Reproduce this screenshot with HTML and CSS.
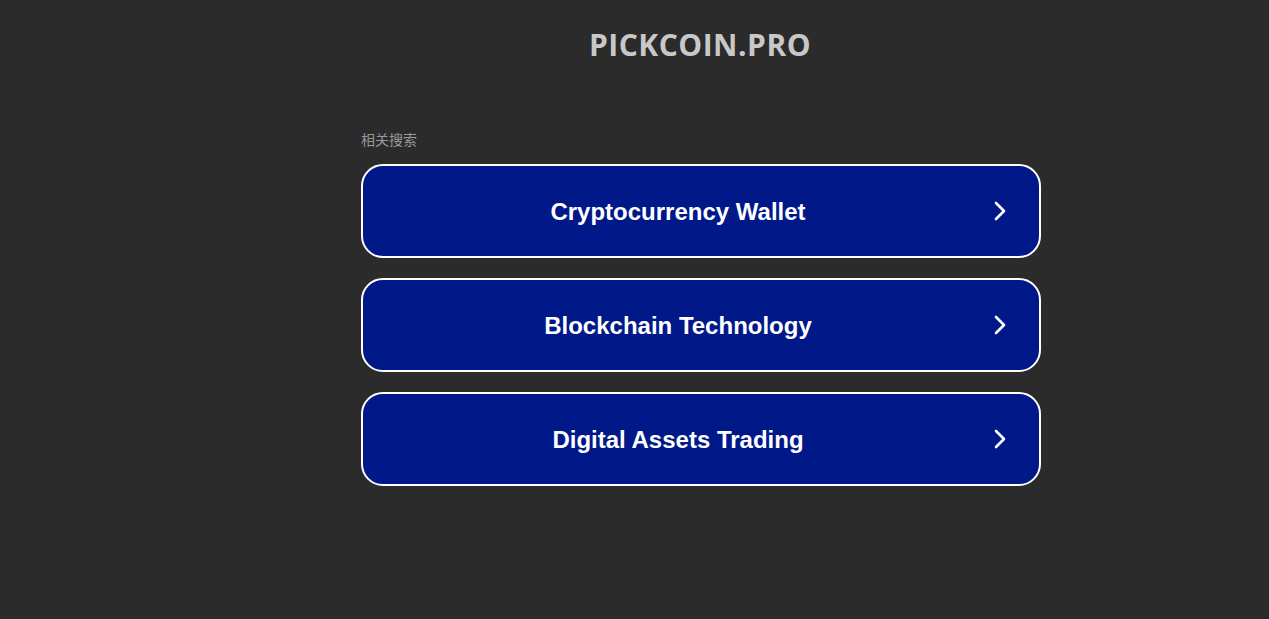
FILE: index.html
```html
<!DOCTYPE html>
<html lang="zh">
<head>
<meta charset="utf-8">
<title>pickcoin.pro</title>
<link rel="stylesheet" href="styles.css">
</head>
<body>
<header class="header">
  <h1 class="domain">PICKCOIN.PRO</h1>
</header>
<main class="content">
  <div class="label">相关搜索</div>
  <ul class="links">
    <li><a class="link" href="#"><span class="link-text">Cryptocurrency Wallet</span><svg class="chev" viewBox="0 0 14 20" width="14" height="20"><path d="M3 2 L11 10 L3 18" fill="none" stroke="#fff" stroke-width="2.6" stroke-linecap="round" stroke-linejoin="round"/></svg></a></li>
    <li><a class="link" href="#"><span class="link-text">Blockchain Technology</span><svg class="chev" viewBox="0 0 14 20" width="14" height="20"><path d="M3 2 L11 10 L3 18" fill="none" stroke="#fff" stroke-width="2.6" stroke-linecap="round" stroke-linejoin="round"/></svg></a></li>
    <li><a class="link" href="#"><span class="link-text">Digital Assets Trading</span><svg class="chev" viewBox="0 0 14 20" width="14" height="20"><path d="M3 2 L11 10 L3 18" fill="none" stroke="#fff" stroke-width="2.6" stroke-linecap="round" stroke-linejoin="round"/></svg></a></li>
  </ul>
</main>
</body>
</html>
```
FILE: styles.css
```css
html, body {
  margin: 0;
  padding: 0;
  background: #2b2b2b;
  height: 100%;
}
body {
  font-family: "Liberation Sans", Arial, sans-serif;
}
.header {
  display: flex;
  justify-content: center;
  padding-top: 26px;
  padding-left: 131px;
}
.domain {
  margin: 0;
  font-family: "Open Sans", "Noto Sans", sans-serif;
  font-weight: 700;
  font-size: 30px;
  line-height: 38px;
  letter-spacing: 0.5px;
  color: #c8c8c8;
}
.content {
  width: 680px;
  margin: 67px auto 0 361px;
}
.label {
  font-family: "Noto Sans CJK SC", sans-serif;
  font-size: 14px;
  line-height: 16px;
  color: #999;
  margin-bottom: 17px;
}
.links {
  list-style: none;
  margin: 0;
  padding: 0;
  display: flex;
  flex-direction: column;
  gap: 20px;
}
.link {
  display: flex;
  align-items: center;
  height: 94px;
  box-sizing: border-box;
  border: 2px solid #fff;
  border-radius: 22px;
  background: #001888;
  color: #fff;
  text-decoration: none;
  padding-right: 32px;
}
.link-text {
  flex: 1;
  text-align: center;
  font-weight: 700;
  font-size: 24px;
  padding-top: 1px;
}
.chev {
  display: block;
}
```
